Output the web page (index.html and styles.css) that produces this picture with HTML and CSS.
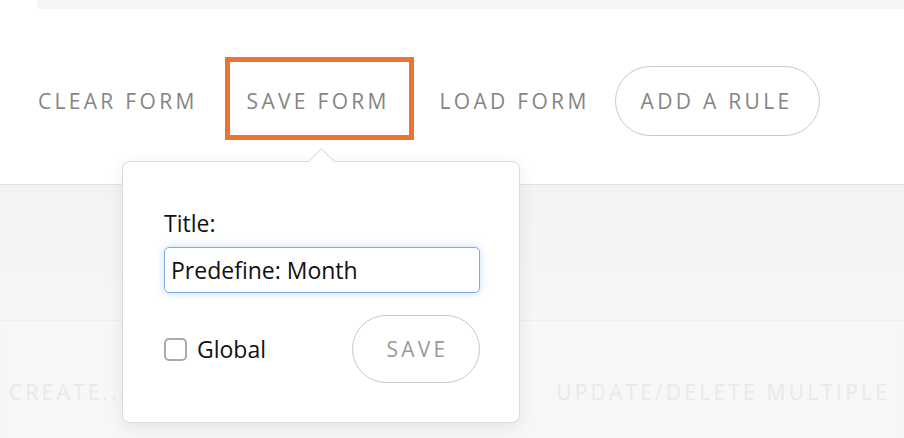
FILE: index.html
```html
<!DOCTYPE html>
<html>
<head>
<meta charset="utf-8">
<link rel="stylesheet" href="styles.css">
</head>
<body>
<div class="topbar"></div>
<header class="header">
  <nav class="nav">
    <span class="nav-item">CLEAR FORM</span>
    <span class="nav-item active">SAVE FORM</span>
    <span class="nav-item load">LOAD FORM</span>
    <span class="nav-item pill">ADD A RULE</span>
  </nav>
</header>
<main class="content">
  <div class="row row-top"></div>
  <div class="row row-actions">
    <span class="faint create">CREATE...</span>
    <span class="faint update">UPDATE/DELETE MULTIPLE</span>
  </div>
</main>
<div class="popover">
  <div class="arrow"></div>
  <label class="label">Title:</label>
  <div class="input">Predefine: Month</div>
  <div class="popover-foot">
    <label class="check"><span class="box"></span>Global</label>
    <span class="save">SAVE</span>
  </div>
</div>
</body>
</html>
```

FILE: styles.css
```css
* { box-sizing: border-box; }
html, body { margin: 0; padding: 0; }
body {
  width: 904px;
  height: 438px;
  overflow: hidden;
  background: #ffffff;
  font-family: "Open Sans", "Lato", sans-serif;
  position: relative;
}
.topbar {
  margin-left: 37px;
  height: 9px;
  background: #f5f5f5;
}
.header {
  height: 176px;
  background: #fff;
  border-bottom: 1px solid #e2e2e2;
  position: relative;
  z-index: 1;
}
.nav {
  display: flex;
  align-items: center;
  padding-left: 38px;
  padding-top: 48px;
}
.nav-item {
  font-size: 21px;
  letter-spacing: 3.3px;
  color: #858585;
  margin-right: 27px;
  line-height: 24px;
  white-space: nowrap;
}
.nav-item.active {
  border: 5px solid #ec7431;
  width: 189px;
  height: 83px;
  padding: 5px 0 0 17px;
  margin-bottom: 5px;
  margin-right: 26px;
  display: flex;
  align-items: center;
}
.nav-item.load {
  margin-right: 25px;
}
.nav-item.pill {
  border: 1.5px solid #c9c9c9;
  border-radius: 36px;
  width: 205px;
  height: 70px;
  padding: 0 0 0 25px;
  display: flex;
  align-items: center;
}
.content {
  height: 253px;
  background: #f7f7f7;
  box-shadow: inset 0 12px 14px -10px rgba(0,0,0,0.08);
}
.row-top {
  height: 136px;
  border-bottom: 1px solid #f0f0f0;
  background: linear-gradient(#f3f3f3, #f6f6f6);
}
.row-actions {
  display: flex;
  justify-content: space-between;
  padding: 57px 14px 0 9px;
}
.faint {
  font-size: 21px;
  letter-spacing: 3.2px;
  color: #e9e9e9;
  white-space: nowrap;
}
.popover {
  position: absolute;
  left: 122px;
  top: 161px;
  width: 398px;
  height: 262px;
  background: #fff;
  border: 1px solid #dcdcdc;
  border-radius: 8px;
  box-shadow: 0 4px 16px rgba(0,0,0,0.08);
  padding: 48px 41px 0 41px;
  z-index: 5;
}
.arrow {
  position: absolute;
  left: 189px;
  top: -10px;
  width: 19px;
  height: 19px;
  background: #fff;
  border-left: 1px solid #dcdcdc;
  border-top: 1px solid #dcdcdc;
  transform: rotate(45deg);
}
.label {
  display: block;
  font-size: 23px;
  color: #111;
  line-height: 26px;
  margin-bottom: 11px;
}
.input {
  height: 46px;
  width: 316px;
  border: 1px solid #79abe8;
  border-radius: 5px;
  box-shadow: 0 0 8px rgba(100,160,240,0.35);
  font-size: 23px;
  color: #111;
  padding: 0 6px;
  line-height: 44px;
}
.popover-foot {
  display: flex;
  align-items: center;
  justify-content: space-between;
  margin-top: 22px;
  width: 316px;
}
.check {
  display: flex;
  align-items: center;
  font-size: 23px;
  color: #111;
}
.box {
  width: 23px;
  height: 23px;
  border: 2px solid #aaa;
  border-radius: 5px;
  margin-right: 10px;
}
.save {
  width: 128px;
  height: 68px;
  border: 1.5px solid #c9c9c9;
  border-radius: 34px;
  display: flex;
  align-items: center;
  justify-content: center;
  padding-left: 3px;
  font-size: 21px;
  letter-spacing: 3.2px;
  color: #999;
}
```
